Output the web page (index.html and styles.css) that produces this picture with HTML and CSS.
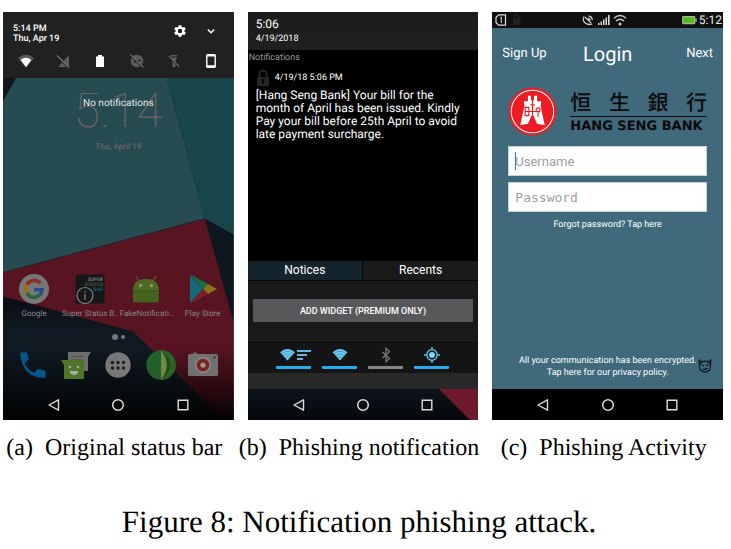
FILE: index.html
```html
<!DOCTYPE html>
<html lang="en">
<head>
<meta charset="utf-8">
<title>Figure 8: Notification phishing attack</title>
<link rel="stylesheet" href="styles.css">
</head>
<body>
<svg class="defs" aria-hidden="true">
  <symbol id="back" viewBox="0 0 14 14"><path d="M11.5 1.8v10.4L2 7z" fill="none" stroke="currentColor" stroke-width="1.4" stroke-linejoin="round"/></symbol>
  <symbol id="home" viewBox="0 0 14 14"><circle cx="7" cy="7" r="5.3" fill="none" stroke="currentColor" stroke-width="1.5"/></symbol>
  <symbol id="recent" viewBox="0 0 14 14"><path d="M2.2 2.2h9.6v9.6H2.2z" fill="none" stroke="currentColor" stroke-width="1.4"/></symbol>
  <symbol id="bluewifi" viewBox="0 0 18 14"><path d="M1 4.6Q9-2.6 17 4.6L9 13.4z" fill="#6fcbf3"/><path d="M2.6 6.2Q9 .8 15.400 6.2M4.600 8.400Q9 4.600 13.400 8.400M6.400 10.600Q9 8.400 11.600 10.600" fill="none" stroke="#2b83ad" stroke-width=".7"/></symbol>
</svg>
<main class="figure">
  <div class="panels">
    <figure class="panel">
      <section class="phone launcher" aria-label="Original status bar">
        <svg class="wallpaper" viewBox="0 0 231 409" preserveAspectRatio="none" aria-hidden="true">
          <defs>
            <linearGradient id="fade" x1="0" y1="0" x2="0" y2="1"><stop offset="0" stop-color="#000" stop-opacity="0"/><stop offset="1" stop-color="#000" stop-opacity=".95"/></linearGradient>
            <linearGradient id="navy" x1="0" y1="0" x2="0" y2="1"><stop offset="0" stop-color="#0a0d12"/><stop offset=".3" stop-color="#101a22"/></linearGradient>
          </defs>
          <path d="M0 0h231v409H0z" fill="#12161c"/>
          <path d="M13 66h151l38 141L0 261V90z" fill="#264b51"/>
          <path d="M164 66h67v157l-29-16z" fill="#17454b"/>
          <path d="M202 207l29 16v88z" fill="#0e1720"/>
          <path d="M202 207l29 104v98h-9l-92-89L0 285v-24z" fill="#591422"/>
          <path d="M202 207L0 261" stroke="#2b2027" stroke-width="1"/>
          <path d="M0 285l130 35 92 89H0z" fill="url(#navy)"/>
          <path d="M0 335h231v74H0z" fill="url(#fade)"/>
        </svg>
        <header class="shade">
          <div class="shade-top">
            <p class="shade-time">5:14 PM<br>Thu, Apr 19</p>
            <button class="icon-btn" aria-label="Settings"><svg width="14" height="14" viewBox="0 0 24 24"><path fill="#fff" fill-rule="evenodd" d="M19.400 13a7.500 7.500 0 0 0 0-2l2.100-1.700c.2-.1.3-.4.1-.6l-2-3.500c-.1-.2-.4-.3-.6-.2l-2.500 1a7.300 7.300 0 0 0-1.700-1l-.4-2.600c0-.2-.2-.4-.5-.4h-4c-.2 0-.4.2-.5.4L9 5a7.700 7.700 0 0 0-1.700 1L4.900 5c-.2-.1-.5 0-.6.2l-2 3.500c-.1.2-.1.5.1.6L4.600 11a8 8 0 0 0 0 2l-2.100 1.700c-.2.1-.3.4-.1.6l2 3.500c.1.2.4.3.6.2l2.400-1c.5.4 1.100.7 1.700 1l.4 2.600c0 .2.2.4.5.4h4c.2 0 .5-.2.5-.4l.4-2.600a7 7 0 0 0 1.700-1l2.500 1c.2.1.5 0 .6-.2l2-3.500c.1-.2.1-.5-.1-.6zM12 15.800a3.800 3.800 0 1 1 0-7.600 3.800 3.800 0 0 1 0 7.600z"/></svg></button>
            <button class="icon-btn" aria-label="Expand"><svg width="14" height="14" viewBox="0 0 14 14"><path d="M3.800 5.500L7 8.700l3.200-3.200" fill="none" stroke="#fff" stroke-width="1.500"/></svg></button>
          </div>
          <div class="quick">
            <svg viewBox="0 0 16 16"><path d="M0 5Q8-2 16 5L8 15z" fill="#585858"/><path d="M2.700 7Q8 2.600 13.300 7L8 14z" fill="#fff"/></svg>
            <svg viewBox="0 0 16 16"><path d="M14 2v12H3z" fill="#5c5c5c"/><path d="M2 3l12 12" stroke="#212121" stroke-width="2"/><path d="M2 2.500l12 12" stroke="#757575" stroke-width="1.200"/></svg>
            <svg viewBox="0 0 16 16"><path d="M6 2h4v1.500h2V14H4V3.500h2z" fill="#fff"/></svg>
            <svg viewBox="0 0 16 16"><circle cx="8" cy="8" r="6.200" fill="#5c5c5c"/><circle cx="6" cy="9" r="1" fill="#212121"/><path d="M8.500 7.500H12" stroke="#212121" stroke-width="1.400"/><path d="M2 3l12 12" stroke="#212121" stroke-width="1.600"/><path d="M1.500 1.500l13 13" stroke="#6a6a6a" stroke-width="1.200"/></svg>
            <svg viewBox="0 0 16 16"><path d="M5 2h6v1.500H5zM5 4.500h6L9.500 8v6h-3V8z" fill="#5c5c5c"/><path d="M3 4l10 10" stroke="#212121" stroke-width="1.500"/><path d="M3 3l10 10.500" stroke="#686868" stroke-width="1.200"/></svg>
            <svg viewBox="0 0 16 16"><rect x="3.800" y="1.700" width="8.400" height="12.600" rx="1" fill="none" stroke="#fff" stroke-width="1.400"/><path d="M3.500 2.500h9M3.500 13.300h9" stroke="#fff" stroke-width="2"/></svg>
          </div>
        </header>
        <p class="clock">5.14</p>
        <p class="date">Thu, April 19</p>
        <p class="empty">No notifications</p>
        <div class="apps">
          <a href="#"><svg viewBox="0 0 30 30"><circle cx="15" cy="15" r="15" fill="#777"/><g fill="none" stroke-width="3.600"><path d="M21.400 9.300A8.200 8.200 0 0 0 8 10.600" stroke="#8e2d25"/><path d="M8 10.600a8.200 8.200 0 0 0 0 8.800" stroke="#997409"/><path d="M8 19.400a8.200 8.200 0 0 0 12.500 1.800" stroke="#226b36"/><path d="M20.500 21.200a8.200 8.200 0 0 0 2.600-5.400H15" stroke="#284f8d"/></g></svg>Google</a>
          <a href="#"><svg viewBox="0 0 30 30"><rect x=".5" y=".5" width="29" height="29" rx="2" fill="#161717"/><text class="ssb" x="28" y="6.500">SUPER</text><text class="ssb dim" x="28" y="11.500">STATUS</text><text class="ssb blue" x="28" y="16.500">BAR</text><circle cx="10" cy="21.500" r="8" fill="none" stroke="#858585" stroke-width="1.200"/><path d="M10 20v6M10 17v1.600" stroke="#858585" stroke-width="1.300"/></svg>Super Status B..</a>
          <a href="#"><svg viewBox="0 0 30 30"><path d="M5 2l4 6M25 2l-4 6" stroke="#4d6b22" stroke-width="1.200"/><path d="M2 17Q2 5 15 5t13 12z" fill="#4d6b22"/><path d="M2 17h26v9.500q0 2-2 2H4q-2 0-2-2z" fill="#45631d"/><path d="M2 17h26" stroke="#385118" stroke-width="1"/><circle cx="9.500" cy="11.500" r="1.500" fill="#999"/><circle cx="20.500" cy="11.500" r="1.500" fill="#999"/></svg>FakeNotificati..</a>
          <a href="#"><svg viewBox="0 0 30 30"><path d="M2 1v28l13-14z" fill="#14687c"/><path d="M2 0l18 10-5 5z" fill="#167044"/><path d="M20 10l9 5-9 5-5-5z" fill="#8b7416"/><path d="M2 30l13-15 5 5z" fill="#7e2028"/></svg>Play Store</a>
        </div>
        <div class="dots"><i></i><i></i></div>
        <div class="dock">
          <button class="icon-btn" aria-label="Phone"><svg viewBox="0 0 30 30"><path d="M2 2.500h7l1.500 7-4 4q4 7 9.500 9.500l4-4 7.500 2V28Q4 28 2 2.500z" fill="#02588a"/></svg></button>
          <button class="icon-btn" aria-label="Messages"><svg viewBox="0 0 30 30"><path d="M7 2h23l-3 5v14H7z" fill="#6d6d6d"/><path d="M10 6.500h12M10 10h12" stroke="#4b4b4b"/><path d="M0 10h23v18q0 1-1 1H4q-1 0-1-1V15z" fill="#4f7526"/><circle cx="9" cy="17" r="1.300" fill="#aaa"/><circle cx="17" cy="17" r="1.300" fill="#aaa"/><path d="M8.500 21h9q-1 4-4.500 4t-4.500-4" fill="#aaa"/></svg></button>
          <button class="icon-btn" aria-label="All apps"><svg viewBox="0 0 30 30"><circle cx="15" cy="15" r="12.700" fill="#787878"/><g fill="#1c1c1c"><circle cx="9.500" cy="12.500" r="1.700"/><circle cx="15" cy="12.500" r="1.700"/><circle cx="20.500" cy="12.500" r="1.700"/><circle cx="9.500" cy="18" r="1.700"/><circle cx="15" cy="18" r="1.700"/><circle cx="20.500" cy="18" r="1.700"/></g></svg></button>
          <button class="icon-btn" aria-label="Browser"><svg viewBox="0 0 30 30"><circle cx="15" cy="15" r="14.700" fill="#235f26"/><path d="M15 .3a14.700 14.700 0 0 1 0 29.400z" fill="#2f6325"/><path d="M15 .3q12 14.700 0 29.400z" fill="#6e8a4b"/><path d="M15 .3q19 14.700 0 29.400 12-14.700 0-29.400" fill="#1e4c1d"/></svg></button>
          <button class="icon-btn" aria-label="Camera"><svg viewBox="0 0 30 30"><path d="M5 2.500h4V5H5z" fill="#666"/><rect y="4" width="30" height="22" rx="1.500" fill="#707070"/><circle cx="15" cy="15" r="8" fill="#858585"/><circle cx="15" cy="15" r="6.300" fill="#7d211c"/><circle cx="15" cy="15" r="2.600" fill="#999"/><circle cx="26.500" cy="7.500" r="1.200" fill="#333"/></svg></button>
        </div>
        <nav class="nav"><button class="icon-btn" aria-label="Back"><svg><use href="#back"/></svg></button><button class="icon-btn" aria-label="Home"><svg><use href="#home"/></svg></button><button class="icon-btn" aria-label="Recent apps"><svg><use href="#recent"/></svg></button></nav>
      </section>
      <figcaption>(a)&ensp;Original status bar</figcaption>
    </figure>

    <figure class="panel">
      <section class="phone drawer" aria-label="Phishing notification">
        <header class="drawer-head"><p class="drawer-time">5:06</p><p class="drawer-date">4/19/2018</p></header>
        <h2 class="drawer-title">Notifications</h2>
        <article class="notice">
          <div class="notice-meta"><svg width="14" height="18" viewBox="0 0 14 18"><path d="M3.500 9V5a3.500 3.500 0 0 1 7 0v4" fill="none" stroke="#262626" stroke-width="2"/><rect x="1" y="8" width="12" height="9" rx="1" fill="#262626"/><circle cx="7" cy="11.500" r="1.400" fill="#000"/><path d="M7 12v3" stroke="#000" stroke-width="1.400"/></svg><time>4/19/18 5:06 PM</time></div>
          <p class="notice-text">[Hang Seng Bank] Your bill for the month of April has been issued. Kindly Pay your bill before 25th April to avoid late payment surcharge.</p>
        </article>
        <div class="tabs"><button class="active">Notices</button><button>Recents</button></div>
        <div class="widget"><button>ADD WIDGET (PREMIUM ONLY)</button></div>
        <div class="toggles">
          <button aria-label="Wi-Fi data"><svg width="34" height="16" viewBox="0 0 34 16"><svg x="2" y="1" width="17" height="13"><use href="#bluewifi"/></svg><path d="M20 4h14M20 8h10M20 12h6" stroke="#5fb9df" stroke-width="2"/></svg></button>
          <button aria-label="Wi-Fi"><svg width="18" height="16" viewBox="0 0 18 16"><svg y="1" width="18" height="13"><use href="#bluewifi"/></svg></svg></button>
          <button class="off" aria-label="Bluetooth"><svg width="14" height="16" viewBox="0 0 14 16"><path d="M3.500 5l7 6.500L7 14.500v-13l3.500 3L3.500 11" fill="none" stroke="#777" stroke-width="1.300"/></svg></button>
          <button aria-label="Location"><svg width="16" height="16" viewBox="0 0 16 16"><circle cx="8" cy="8" r="5.200" fill="none" stroke="#5fb9df" stroke-width="1.500"/><circle cx="8" cy="8" r="2.900" fill="#85d5f4"/><path d="M8 0v3M8 13v3M0 8h3M13 8h3" stroke="#5fb9df" stroke-width="1.500"/></svg></button>
        </div>
        <div class="handle"></div>
        <nav class="nav"><svg class="corner" viewBox="0 0 39 31" aria-hidden="true"><path d="M0 0h39v31h-8z" fill="#6e1a2c"/></svg><button class="icon-btn" aria-label="Back"><svg><use href="#back"/></svg></button><button class="icon-btn" aria-label="Home"><svg><use href="#home"/></svg></button><button class="icon-btn" aria-label="Recent apps"><svg><use href="#recent"/></svg></button></nav>
      </section>
      <figcaption>(b)&ensp;Phishing notification</figcaption>
    </figure>

    <figure class="panel">
      <section class="phone login" aria-label="Phishing Activity">
        <div class="status">
          <svg width="32" height="14" viewBox="0 0 32 14"><path d="M4.500 1.800h7v10.400h-7L2 9.500v-5z" fill="none" stroke="#ddd" stroke-width="1.200" stroke-linejoin="round"/><path d="M6 5l1.300-.8V10" fill="none" stroke="#ddd"/><path d="M20.500 6.500V4.200a2.200 2.200 0 0 1 4.400 0v2.300" fill="none" stroke="#222" stroke-width="1.300"/><path d="M19 6h7.500v6H19z" fill="#222"/></svg>
          <svg width="46" height="14" viewBox="0 0 46 14"><g fill="none" stroke="#c8c8c8" stroke-width="1.300"><path d="M3 3.500q-2 4 1.200 6.500t7 .8M4 4l6 6M7 5.500a2 2 0 0 1 2 2M7.500 3q3.500.2 3.800 4"/></g><path d="M17 10h1.500v2H17zM19.500 8.500H21V12h-1.500zM22 6.500h1.500V12H22zM24.500 4.500H26V12h-1.500zM27 2h1.600v10H27z" fill="#ddd"/><g fill="none" stroke="#ccc" stroke-width="1.400"><path d="M33 5.200q6-5.400 12 0M35 8q4-3.600 8 0"/></g><circle cx="39" cy="11" r="1.500" fill="#ccc"/></svg>
          <span class="battery"><svg width="15" height="10" viewBox="0 0 15 10"><rect x=".7" y="1.700" width="12" height="7" rx=".8" fill="#52be1c" stroke="#a9b5a4" stroke-width="1.200"/><path d="M14 3.500v3.500" stroke="#a9b5a4" stroke-width="1.400"/></svg>5:12</span>
        </div>
        <header class="login-head"><a href="#">Sign Up</a><h1>Login</h1><a href="#">Next</a></header>
        <div class="brand">
          <svg class="mark" viewBox="0 0 48 48" aria-hidden="true"><circle cx="24" cy="24" r="23.500" fill="#ed1c24"/><circle cx="24" cy="24" r="20.800" fill="none" stroke="#fff" stroke-width="1"/><path fill="#fff" d="M19.500 8.500h3V13h3V8.500h3V14h4l-.5 5 4 18.500-7.500-1.500-4.500-10-4.500 10-7.500 1.500 4-18.500-.5-5h4z"/><g fill="none" stroke="#ed1c24" stroke-width="1.100"><path d="M16.800 20h3.600v8h-3.600zM16.800 24H31M24 12v15M29.500 25.500v4M22 17.500h4"/><circle cx="29.500" cy="22.500" r="2"/></g></svg>
          <div class="brand-name"><p class="brand-cn" lang="zh-Hant"><span>恒</span><span>生</span><span>銀</span><span>行</span></p><p class="brand-en">HANG SENG BANK</p></div>
        </div>
        <form class="form">
          <div class="field"><input type="text" placeholder="Username" aria-label="Username"><span class="caret"></span></div>
          <div class="field"><input class="mono" type="password" placeholder="Password" aria-label="Password"></div>
          <a href="#">Forgot password? Tap here</a>
        </form>
        <footer class="privacy"><p>All your communication has been encrypted.<br><a href="#">Tap here for our privacy policy.</a></p>
          <svg class="imp" viewBox="0 0 14 14" aria-hidden="true"><g fill="none" stroke="#0c1418" stroke-width="1.200"><circle cx="7" cy="7.600" r="5.500"/><path d="M1.500 5.500q-.6-2.500 0-4.500 1 1.300 2.500 1.700M12.500 5.500q.6-2.500 0-4.500-1 1.300-2.500 1.700M4 5.800l2 1.300M10 5.800L8 7.100M4.500 10q2.500 1 5-.8"/></g></svg>
        </footer>
        <nav class="nav"><button class="icon-btn" aria-label="Back"><svg><use href="#back"/></svg></button><button class="icon-btn" aria-label="Home"><svg><use href="#home"/></svg></button><button class="icon-btn" aria-label="Recent apps"><svg><use href="#recent"/></svg></button></nav>
      </section>
      <figcaption>(c)&ensp;Phishing Activity</figcaption>
    </figure>
  </div>
  <p class="caption">Figure 8: Notification phishing attack.</p>
</main>
</body>
</html>
```
FILE: styles.css
```css
* { box-sizing: border-box; }
body, p, h1, h2, figure { margin: 0; }
body { background: #fff; color: #000; font-family: "Liberation Serif", serif; text-rendering: geometricPrecision; }
button { padding: 0; border: 0; background: none; color: inherit; font: inherit; }
a { color: inherit; text-decoration: none; }
svg { display: block; }
.defs { position: absolute; width: 0; height: 0; }

.figure { padding: 12px 8px 0 3px; }
.panels { display: grid; grid-template-columns: repeat(3, minmax(0, 1fr)); gap: 14px; }
figcaption { display: flex; justify-content: center; margin-top: 14px; padding-right: 8px; font-size: 24px; line-height: 28px; white-space: nowrap; }
.caption { margin-top: 40px; padding-right: 8px; font-size: 31px; line-height: 40px; text-align: center; }

.phone {
  position: relative;
  display: flex;
  flex-direction: column;
  aspect-ratio: 231 / 409;
  overflow: hidden;
  color: #fff;
  font-family: Roboto, sans-serif;
}
.icon-btn { display: flex; align-items: center; justify-content: center; }
.nav {
  position: relative;
  display: grid;
  grid-template-columns: repeat(3, 1fr);
  padding: 0 19px;
  height: 31px;
  color: #ddd;
}
.nav .icon-btn svg { width: 14px; height: 14px; }

/* Launcher */
.wallpaper { position: absolute; inset: 0; width: 100%; height: 100%; }
.launcher > :not(.wallpaper):not(.empty) { position: relative; }
.shade { height: 66px; padding-top: 12px; background: #212121; }
.shade-top { display: flex; align-items: flex-start; gap: 17px; padding: 0 16px 0 10px; }
.shade-time { flex: 1; font-size: 9px; font-weight: 500; line-height: 10px; }
.quick { display: grid; grid-template-columns: repeat(6, 1fr); justify-items: center; padding: 9px 4px 0; }
.quick svg { width: 16px; height: 16px; }
.clock { margin-top: 15px; color: #6c6564; font-size: 48px; font-weight: 100; line-height: 36px; text-align: center; }
.date { margin-top: 12px; color: #606263; font-size: 8px; font-weight: 700; line-height: 12px; text-align: center; }
.empty { position: absolute; top: 86px; left: 0; right: 0; font-size: 10px; line-height: 12px; text-align: center; color: #e4e8e8; }
.apps { display: grid; grid-template-columns: repeat(4, minmax(0, 1fr)); margin-top: auto; padding: 0 3px; }
.apps a { display: flex; flex-direction: column; align-items: center; gap: 4px; color: #858585; font-size: 8px; line-height: 12px; white-space: nowrap; }
.apps svg { width: 30px; height: 30px; }
.ssb { fill: #777; font-size: 5px; font-weight: 700; text-anchor: end; }
.ssb.dim { fill: #4c5052; }
.ssb.blue { fill: #0d5472; }
.dots { display: flex; align-items: center; justify-content: center; gap: 3px; height: 6px; margin: 14px 0 10px; }
.dots i { width: 4px; height: 4px; border-radius: 50%; background: #777; }
.dots i:first-child { width: 6px; height: 6px; }
.dock { display: grid; grid-template-columns: repeat(5, 1fr); padding: 0 9px 9px; }
.dock svg { width: 30px; height: 30px; }

/* Notification drawer */
.drawer { background: #000; }
.drawer-head { height: 38px; padding: 4px 8px 0; background: linear-gradient(#1c1c1c, #202020); }
.drawer-time { font-size: 12px; line-height: 16px; }
.drawer-date { font-size: 9px; line-height: 14px; }
.drawer-title { padding: 1px; color: #999; font-size: 9px; font-weight: 400; line-height: 14px; }
.notice { flex: 1; padding: 3px 8px 0; }
.notice-meta { display: flex; align-items: center; gap: 5px; font-size: 9px; line-height: 18px; }
.notice-text { max-width: 208px; font-size: 12px; line-height: 13px; margin-top: 2px; }
.tabs { display: grid; grid-template-columns: 1fr 1fr; height: 20px; background: #1a1a1a; border-bottom: 1px solid #080808; font-size: 12px; line-height: 18px; }
.tabs .active { background: #14242c; border-right: 1px solid #050505; }
.widget { padding: 18px 5px 20px; background: #191919; }
.widget button { width: 100%; height: 23px; border-radius: 1px; background: #58585a; font-size: 9px; font-weight: 500; }
.toggles { display: grid; grid-template-columns: repeat(4, 35px); justify-content: center; gap: 11px; height: 31px; padding-top: 4px; background: #141414; border-top: 1px solid #0c0c0c; }
.toggles button { display: flex; flex-direction: column; align-items: center; justify-content: space-between; height: 22px; border-bottom: 3px solid #22aeee; border-radius: 1px; }
.toggles .off { border-color: #858585; }
.handle { height: 16px; background: #282828; }
.drawer .nav { background: linear-gradient(#0d141b, #06080b); }
.corner { position: absolute; right: 0; top: 0; width: 39px; height: 31px; }

/* Login */
.login { background: #40697b; }
.status { display: flex; align-items: center; justify-content: space-between; height: 16px; padding: 0 1px 0 2px; background: #101010; }
.battery { display: flex; align-items: center; gap: 2px; color: #e8e8e8; font-size: 12px; line-height: 16px; }
.login-head { display: grid; grid-template-columns: 1fr auto 1fr; align-items: center; padding: 12px 10px 0; font-size: 13px; line-height: 28px; }
.login-head h1 { font-size: 20px; font-weight: 400; }
.login-head a:last-child { text-align: right; }
.brand { display: flex; align-items: center; gap: 13px; padding: 18px 16px 0; }
.mark { width: 49px; height: 49px; flex: none; }
.brand-name { flex: 1; padding-top: 2px; color: #0a0a0a; }
.brand-cn { display: flex; justify-content: space-between; border-bottom: 1px solid #0a0a0a; font-family: "Noto Sans CJK TC", sans-serif; font-size: 21px; font-weight: 500; line-height: 28px; }
.brand-en { font-family: "DejaVu Sans", sans-serif; font-size: 13px; font-weight: 700; line-height: 20px; white-space: nowrap; }
.form { display: flex; flex-direction: column; gap: 6px; padding: 9px 16px 0; font-size: 9px; line-height: 14px; text-align: center; }
.field { position: relative; }
.field input { display: block; width: 100%; height: 30px; padding: 0 6px; border: 1px solid #c4d2d8; border-radius: 0; background: #fff; color: #333; font: 13px Roboto, sans-serif; }
.field .mono { font-family: "DejaVu Sans Mono", monospace; }
.field input::placeholder { color: #a0a0a0; opacity: 1; }
.caret { position: absolute; left: 7px; top: 6px; width: 1px; height: 18px; background: #0b9a8b; }
.privacy { position: relative; margin-top: auto; padding-bottom: 10px; font-size: 9px; line-height: 12px; text-align: center; }
.imp { position: absolute; right: 11px; top: 4px; width: 14px; height: 14px; }
.login .nav { background: #000; }
```
